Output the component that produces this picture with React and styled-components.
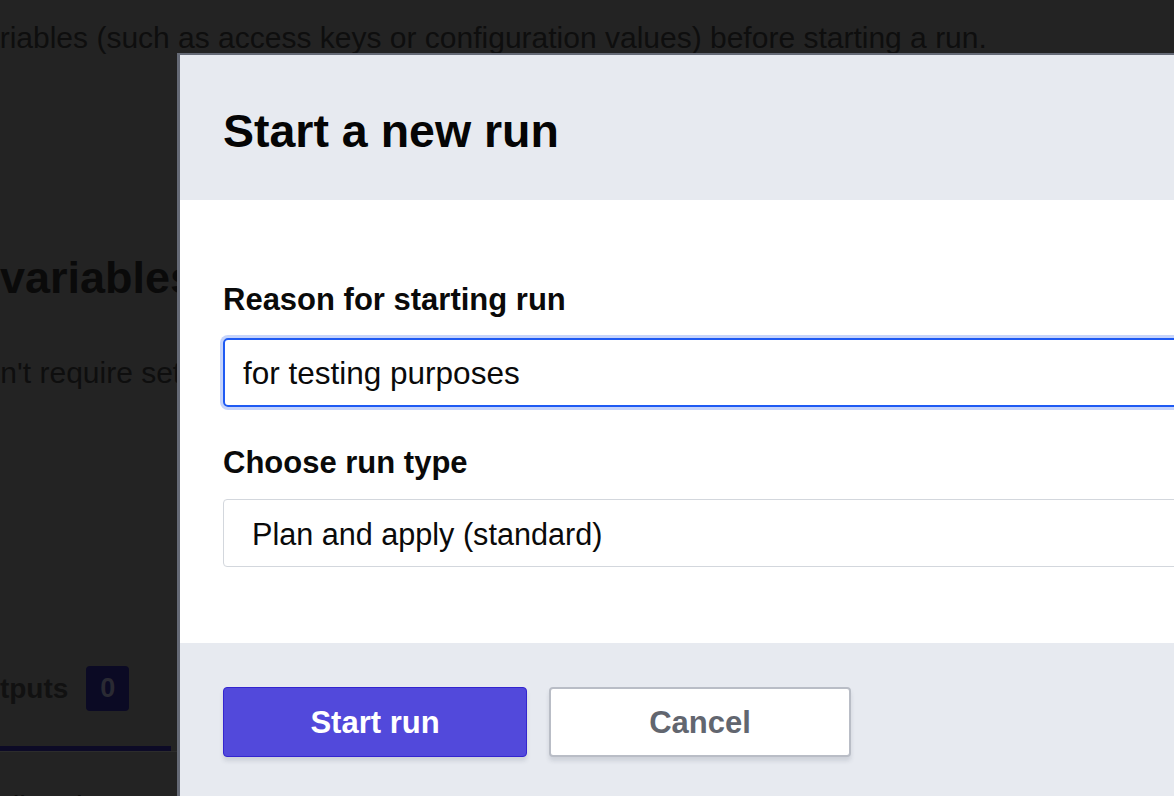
import React from "react";
import styled, { createGlobalStyle } from "styled-components";

const Global = createGlobalStyle`
  html, body {
    margin: 0;
    padding: 0;
    background: #232323;
    overflow: hidden;
  }
  * { box-sizing: border-box; }
  body {
    font-family: "Liberation Sans", Arial, Helvetica, sans-serif;
  }
`;

const Screen = styled.div`
  position: relative;
  width: 100%;
  height: 796px;
  overflow: hidden;
  background: #232323;
`;

const Backdrop = styled.div`
  display: flex;
  flex-direction: column;
  padding-top: 21px;
  color: #101010;
  white-space: nowrap;
`;

const Line = styled.p`
  margin: ${p => p.$top || 0}px 0 0 ${p => p.$shift || 0}px;
  font-size: 30px;
  line-height: 34.5px;
  color: #0e0e0e;
`;

const BgHeading = styled.h2`
  margin: 195px 0 0 ${p => p.$shift || 0}px;
  font-size: 45px;
  line-height: 53px;
  font-weight: 700;
  color: #0a0a0a;
`;

const TabBar = styled.div`
  margin-top: 276px;
  display: flex;
  border-bottom: 1px solid #2c2c2c;
  width: 178px;
`;

const Tab = styled.div`
  display: flex;
  align-items: center;
  gap: 18px;
  flex: 0 0 ${p => p.$w}px;
  padding-bottom: 35px;
  border-bottom: 5px solid #0c0a26;
  margin-left: ${p => p.$shift || 0}px;
`;

const TabLabel = styled.span`
  font-size: 28px;
  font-weight: 700;
  color: #111;
`;

const Badge = styled.span`
  display: inline-flex;
  align-items: center;
  justify-content: center;
  width: 43px;
  height: 45px;
  border-radius: 4px;
  background: #0b0a24;
  color: #2a2a33;
  font-size: 27px;
  font-weight: 700;
`;

const Modal = styled.div`
  position: absolute;
  left: 177px;
  top: 53px;
  width: 1120px;
  border: 2px solid #656a76;
  border-left-width: 3px;
  background: #fff;
  display: flex;
  flex-direction: column;
`;

const Header = styled.div`
  background: #e7eaf0;
  padding: 50px 43px 42px;
`;

const Title = styled.h1`
  margin: 0;
  font-size: 46.5px;
  line-height: 53px;
  font-weight: 700;
  color: #050505;
`;

const Body = styled.div`
  background: #fff;
  padding: 83px 43px 76px;
  display: flex;
  flex-direction: column;
`;

const Label = styled.label`
  display: block;
  font-size: 31px;
  line-height: 34.5px;
  font-weight: 700;
  color: #0a0a0a;
  margin-top: ${p => p.$top || 0}px;
`;

const TextInput = styled.div`
  margin-top: 20px;
  height: 69px;
  border: 2px solid #1f5af3;
  border-radius: 5px;
  box-shadow: 0 0 0 3px #c6d4fb;
  display: flex;
  align-items: center;
  padding-left: 18px;
  padding-top: 2px;
  font-size: 31.5px;
  color: #0a0a0a;
`;

const Select = styled.div`
  margin-top: 19px;
  height: 68px;
  border: 1px solid #d3d7dd;
  border-radius: 4px;
  display: flex;
  align-items: center;
  padding-left: 28px;
  padding-top: 3px;
  font-size: 30.6px;
  color: #0a0a0a;
`;

const Footer = styled.div`
  background: #e7eaf0;
  padding: 44px 43px 60px;
  display: flex;
  gap: 22px;
`;

const Button = styled.button`
  width: ${p => p.$w}px;
  height: 70px;
  border-radius: 4px;
  font-family: inherit;
  font-size: 31px;
  font-weight: 700;
  cursor: pointer;
  padding: 2px 0 0;
  box-shadow: 0 4px 4px rgba(40, 50, 70, 0.13);
  background: ${p => (p.$primary ? "#5249db" : "#fff")};
  color: ${p => (p.$primary ? "#fff" : "#62666f")};
  border: ${p => (p.$primary ? "1.5px solid #3325cf" : "2px solid #b9bdc6")};
`;

export default function App() {
  return (
    <Screen>
      <Global />
      <Backdrop>
        <Line $shift={-32}>
          variables (such as access keys or configuration values) before starting a run.
        </Line>
        <BgHeading>variables</BgHeading>
        <Line $top={52} $shift={-33}>
          don't require setting any variables.
        </Line>
        <TabBar>
          <Tab $shift={-39} $w={210}>
            <TabLabel>Outputs</TabLabel>
            <Badge>0</Badge>
          </Tab>
        </TabBar>
        <Line $top={38} $shift={-4}>
          t listed
        </Line>
      </Backdrop>

      <Modal role="dialog" aria-labelledby="run-title">
        <Header>
          <Title id="run-title">Start a new run</Title>
        </Header>
        <Body>
          <Label>Reason for starting run</Label>
          <TextInput>for testing purposes</TextInput>
          <Label $top={39}>Choose run type</Label>
          <Select>Plan and apply (standard)</Select>
        </Body>
        <Footer>
          <Button $primary $w={304}>Start run</Button>
          <Button $w={302}>Cancel</Button>
        </Footer>
      </Modal>
    </Screen>
  );
}
